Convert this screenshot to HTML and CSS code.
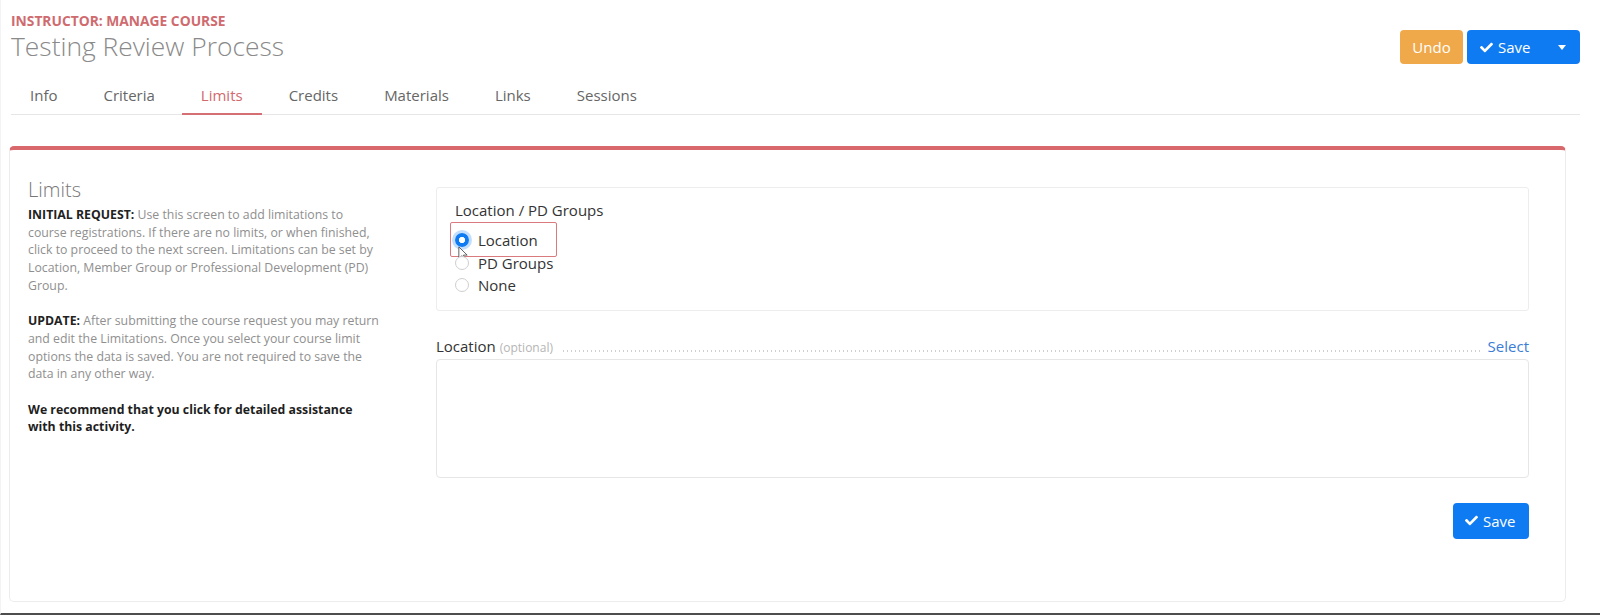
FILE: index.html
```html
<!DOCTYPE html>
<html>
<head>
<meta charset="utf-8">
<link rel="stylesheet" href="styles.css">
</head>
<body>
<div class="page">
  <header class="header">
    <div class="titles">
      <div class="eyebrow">INSTRUCTOR: MANAGE COURSE</div>
      <h1 class="title">Testing Review Process</h1>
    </div>
    <div class="actions">
      <button class="btn btn-undo">Undo</button>
      <button class="btn btn-save btn-split">
        <span class="save-main">
          <svg class="check" viewBox="0 0 512 512"><path d="M173.9 439.4l-166.4-166.4c-10-10-10-26.2 0-36.2l36.2-36.2c10-10 26.2-10 36.2 0L192 312.7 432.1 72.6c10-10 26.2-10 36.2 0l36.2 36.2c10 10 10 26.2 0 36.2l-294.4 294.4c-10 10-26.2 10-36.2 0z"/></svg>
          Save
        </span>
        <span class="caret"></span>
      </button>
    </div>
  </header>

  <nav class="tabs">
    <a class="tab">Info</a>
    <a class="tab">Criteria</a>
    <a class="tab active">Limits</a>
    <a class="tab">Credits</a>
    <a class="tab">Materials</a>
    <a class="tab">Links</a>
    <a class="tab">Sessions</a>
  </nav>

  <section class="card">
    <div class="help">
      <h2 class="help-title">Limits</h2>
      <p class="help-text"><b>INITIAL REQUEST:</b> Use this screen to add limitations to course registrations. If there are no limits, or when finished, click to proceed to the next screen. Limitations can be set by Location, Member Group or Professional Development (PD) Group.</p>
      <p class="help-text"><b>UPDATE:</b> After submitting the course request you may return and edit the Limitations. Once you select your course limit options the data is saved. You are not required to save the data in any other way.</p>
      <p class="help-strong">We recommend that you click for detailed assistance with this activity.</p>
    </div>

    <div class="form">
      <div class="panel">
        <div class="panel-label">Location / PD Groups</div>
        <div class="radio-row">
          <span class="radio checked"></span><span class="radio-label">Location</span>
          <span class="annot"></span>
          <svg class="cursor" viewBox="0 0 12 19"><path d="M1 1 L1 15 L4.5 11.5 L7 17.5 L9 16.6 L6.6 10.8 L11 10.8 Z" fill="#fff" stroke="#444" stroke-width="1" stroke-linejoin="round"/></svg>
        </div>
        <div class="radio-row">
          <span class="radio"></span><span class="radio-label">PD Groups</span>
        </div>
        <div class="radio-row">
          <span class="radio"></span><span class="radio-label">None</span>
        </div>
      </div>

      <div class="field-head">
        <span class="field-label">Location</span>
        <span class="field-opt">(optional)</span>
        <span class="dots"></span>
        <a class="field-link">Select</a>
      </div>
      <div class="field-box"></div>

      <div class="form-foot">
        <button class="btn btn-save">
          <svg class="check" viewBox="0 0 512 512"><path d="M173.9 439.4l-166.4-166.4c-10-10-10-26.2 0-36.2l36.2-36.2c10-10 26.2-10 36.2 0L192 312.7 432.1 72.6c10-10 26.2-10 36.2 0l36.2 36.2c10 10 10 26.2 0 36.2l-294.4 294.4c-10 10-26.2 10-36.2 0z"/></svg>
          Save
        </button>
      </div>
    </div>
  </section>
</div>
</body>
</html>
```

FILE: styles.css
```css
* { box-sizing: border-box; }
html, body { margin: 0; padding: 0; background: #fff; }
body { font-family: "Open Sans", "Noto Sans", sans-serif; color: #333; }

.page {
  height: 615px;
  padding: 0 20px 0 10px;
  border-bottom: 2px solid #4d4d4d;
  border-left: 1px solid #f3f3f3;
}

.header {
  display: flex;
  justify-content: space-between;
  align-items: flex-start;
  padding-top: 12px;
}
.eyebrow {
  font-size: 13.8px;
  font-weight: 700;
  line-height: 18px;
  color: #cf6b6f;
}
.title {
  margin: 0;
  font-size: 26.4px;
  font-weight: 300;
  line-height: 32px;
  color: #8a8a8a;
}

.actions {
  display: flex;
  gap: 4px;
  margin-top: 18px;
}
.btn {
  font-family: "Open Sans", "Noto Sans", sans-serif;
  font-size: 15px;
  color: #fff;
  border: 0;
  border-radius: 4px;
  height: 34px;
  line-height: 34px;
  padding: 0 13px;
  display: inline-flex;
  align-items: center;
  gap: 5px;
}
.btn-undo { background: #efa94a; width: 63px; justify-content: center; }
.btn-save { background: #0f7bf2; }
.btn-split { width: 113px; padding: 0 14px 0 13px; justify-content: space-between; }
.save-main { display: inline-flex; align-items: center; gap: 5px; }
.check { width: 13px; height: 13px; fill: #fff; }
.caret {
  width: 0; height: 0;
  border-left: 4.5px solid transparent;
  border-right: 4.5px solid transparent;
  border-top: 5px solid #fff;
}

.tabs {
  display: flex;
  margin-top: 12px;
  border-bottom: 1px solid #e6e6e6;
}
.tab {
  display: block;
  padding: 8px 19px 7px;
  margin-right: 8px;
  font-size: 15px;
  line-height: 22px;
  color: #666;
  border-bottom: 2px solid transparent;
  margin-bottom: -1px;
}
.tab.active { color: #d1696d; border-bottom-color: #d46f73; }

.card {
  margin: 31px 14px 0 -2px;
  border: 1px solid #ececec;
  border-top: 4px solid #d9686c;
  border-radius: 5px;
  display: grid;
  grid-template-columns: 352px 1fr;
  column-gap: 56px;
  padding: 28px 36px 62px 18px;
}

.help-title {
  margin: 0 0 5px;
  font-size: 20px;
  font-weight: 300;
  line-height: 23px;
  color: #777;
}
.help-text, .help-strong {
  margin: 0 0 17.7px;
  font-size: 12.3px;
  line-height: 17.7px;
  color: #8f8f8f;
}
.help-text b { color: #222; font-weight: 700; }
.help-strong { color: #1e1e1e; font-weight: 700; }

.form { padding-top: 9px; }
.panel {
  border: 1px solid #ededed;
  border-radius: 3px;
  padding: 11px 18px 13px;
}
.panel-label {
  font-size: 15px;
  line-height: 22px;
  color: #333;
  margin-bottom: 8px;
}
.radio-row {
  position: relative;
  display: flex;
  align-items: center;
  height: 22.5px;
  font-size: 15px;
  color: #333;
}
.radio {
  width: 14px; height: 14px;
  border-radius: 50%;
  border: 1px solid #cfcfcf;
  background: #fff;
  margin-right: 9px;
  flex: none;
}
.radio.checked {
  border: 0;
  background: radial-gradient(circle, #fff 0 2.8px, #0f7bf2 3.4px);
  box-shadow: 0 0 0 3px rgba(15, 123, 242, 0.25);
}
.annot {
  position: absolute;
  left: -5px;
  top: -7px;
  width: 107px;
  height: 35px;
  border: 1px solid #d97a7e;
  border-radius: 2px;
}
.cursor {
  position: absolute;
  left: 3px;
  top: 17px;
  width: 10px;
  height: 16px;
}

.field-head {
  display: flex;
  align-items: baseline;
  margin-top: 24px;
  line-height: 22px;
}
.field-label { font-size: 15px; color: #333; }
.field-opt { font-size: 12px; color: #b5b5b5; margin-left: 4px; }
.dots {
  flex: 1;
  height: 2px;
  margin: 0 8px 0 10px;
  background-image: linear-gradient(to right, #cfcfcf 0 1.5px, transparent 1.5px);
  background-size: 4px 2px;
  background-repeat: repeat-x;
  align-self: center;
  position: relative;
  top: 4px;
}
.field-link { font-size: 15px; color: #3a7dd6; }
.field-box {
  height: 119px;
  border: 1px solid #e6e6e6;
  border-radius: 4px;
}
.form-foot {
  display: flex;
  justify-content: flex-end;
  margin-top: 25px;
}
.form-foot .btn { height: 36px; width: 76px; padding: 0 12px; }
```
